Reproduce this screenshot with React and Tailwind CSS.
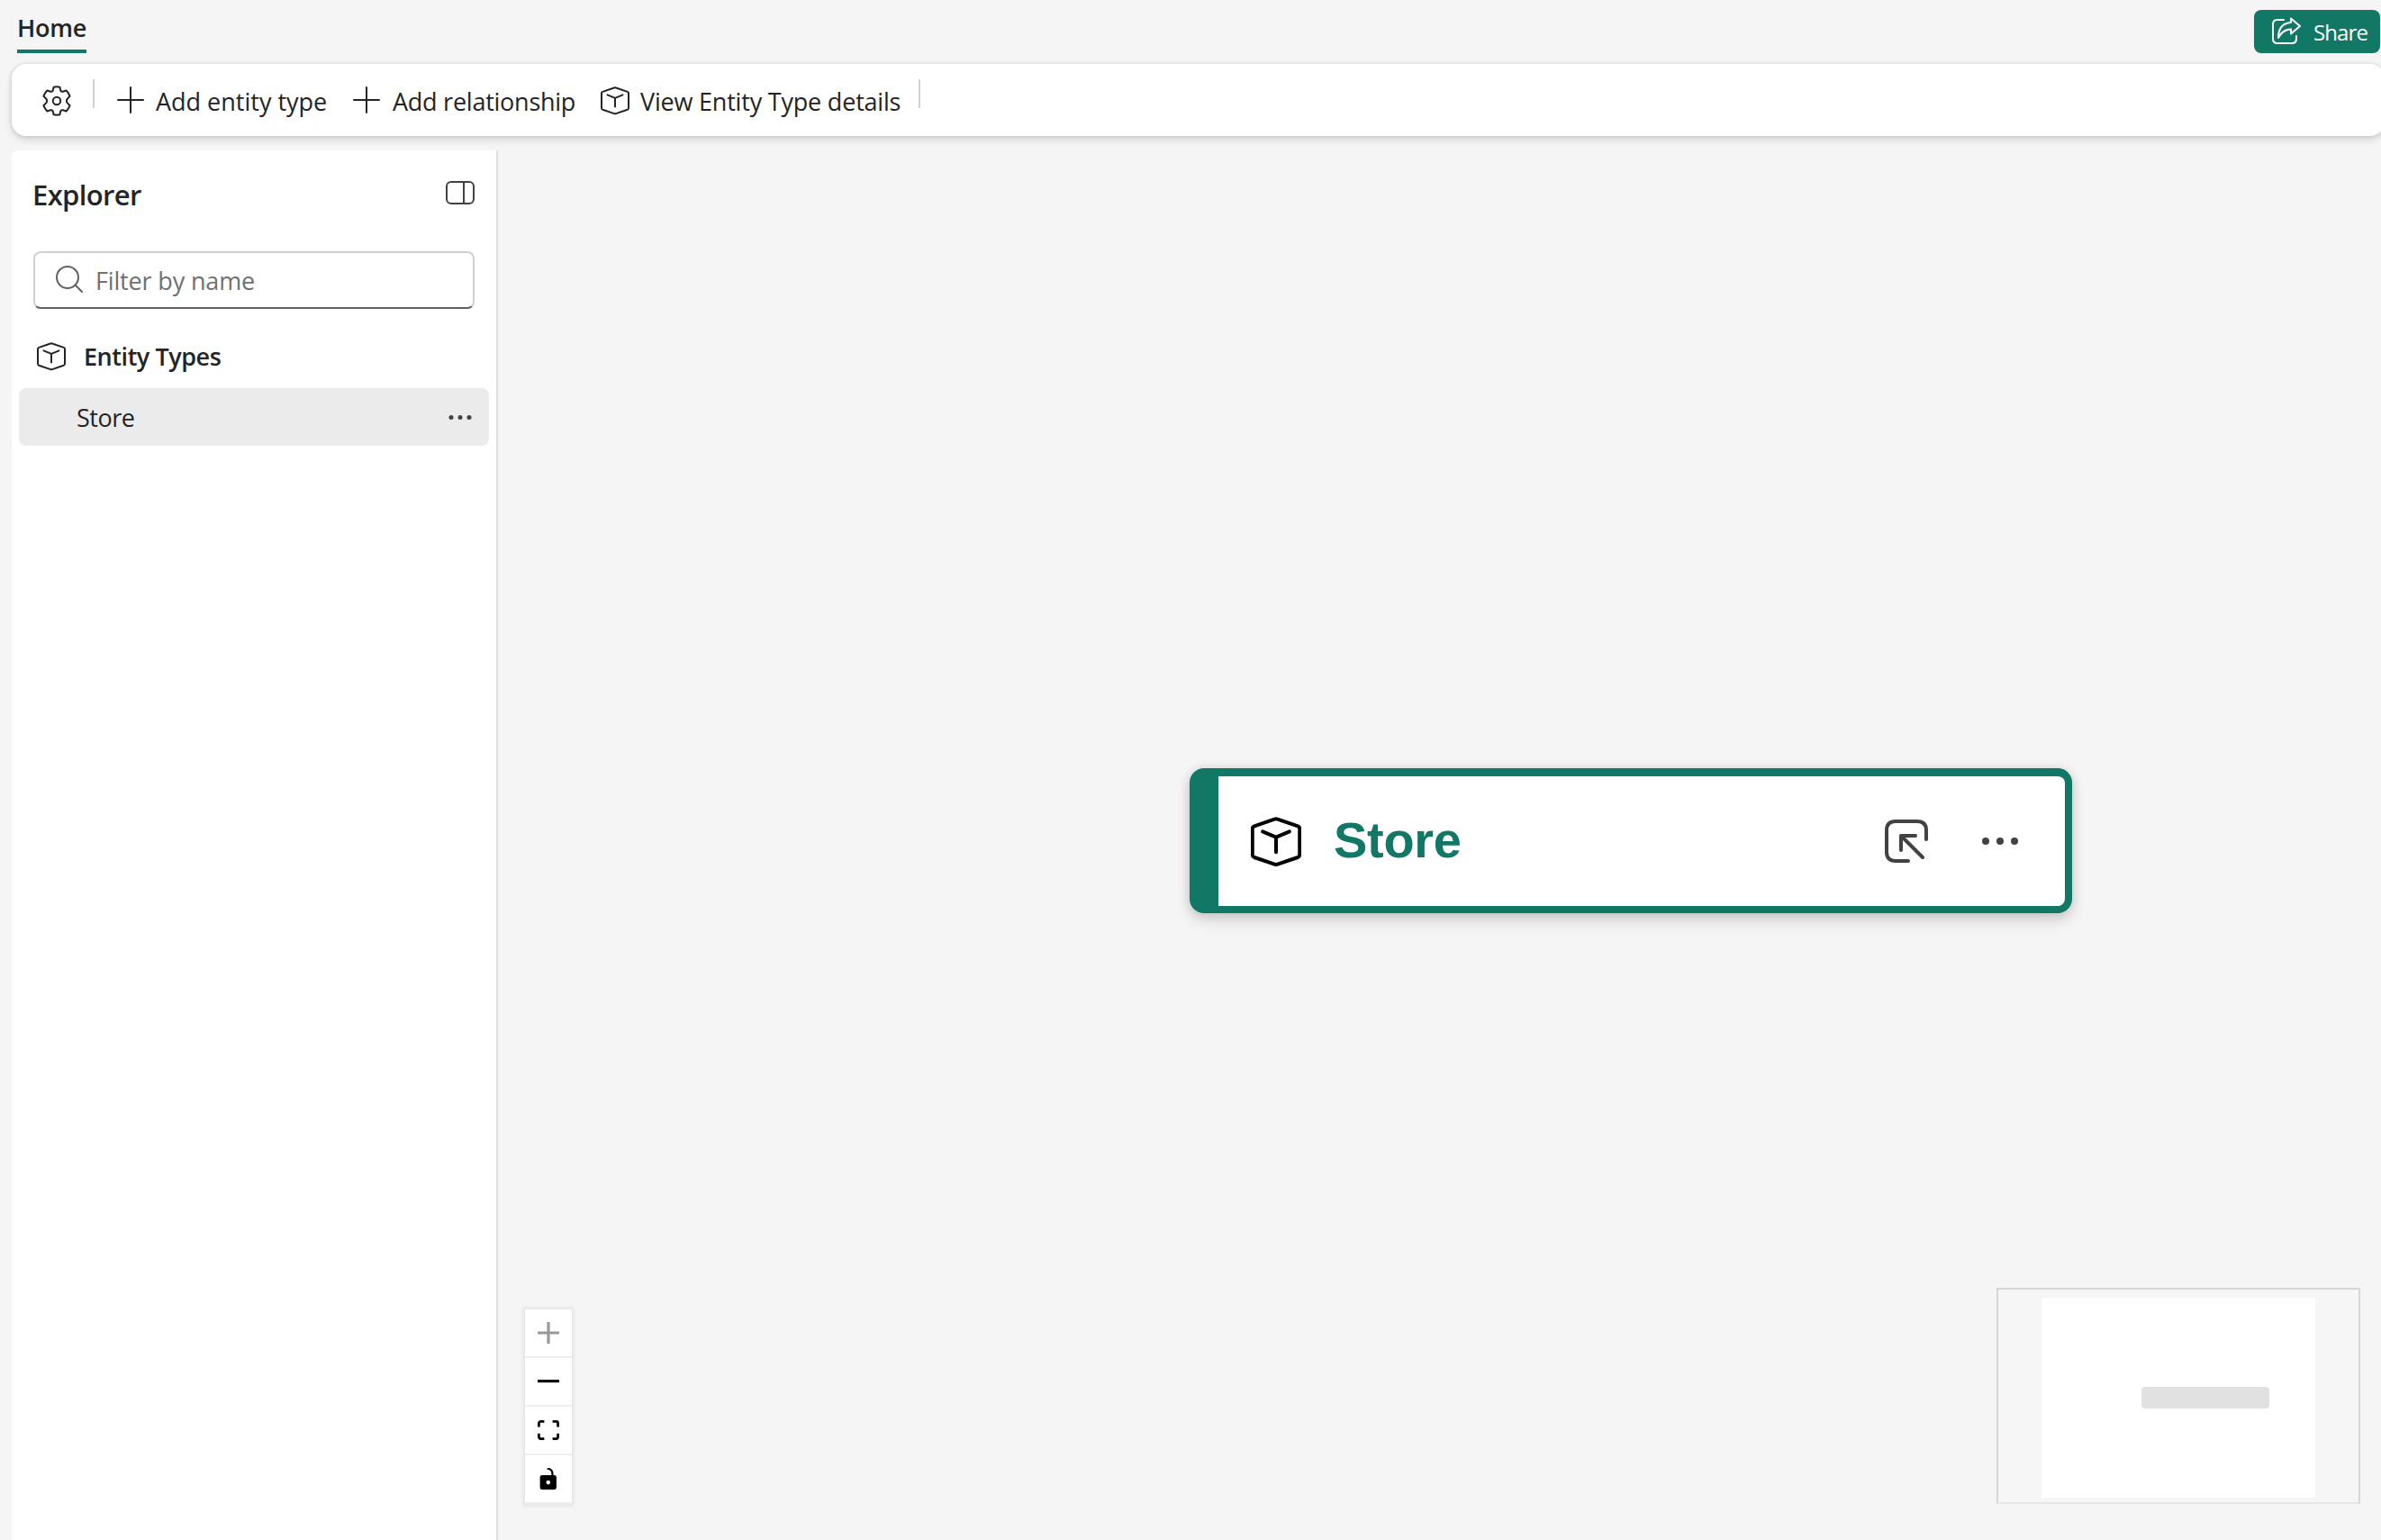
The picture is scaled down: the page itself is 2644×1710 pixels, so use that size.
import React from 'react';

const CubeIcon = ({ className, strokeWidth = 2 }) => (
    <svg className={className} viewBox="0 0 32 32" fill="none" stroke="currentColor" strokeWidth={strokeWidth} strokeLinecap="round" strokeLinejoin="round">
        <path d="M15 1.5 Q16 1.1 17 1.5 L29.8 5.9 Q31 6.4 31 7.6 V24 Q31 25.2 29.8 25.7 L17 30.1 Q16 30.5 15 30.1 L2.2 25.7 Q1 25.2 1 24 V7.6 Q1 6.4 2.2 5.9 Z" />
        <path d="M7.5 9.4 L16 12.9 L24.5 9.4 M16 12.9 V22.4" />
    </svg>
);

const PlusIcon = () => (
    <svg className="w-[30px] h-[30px] shrink-0" viewBox="0 0 30 30" stroke="currentColor" strokeWidth="2" strokeLinecap="round">
        <path d="M15 1V29M1 15H29" />
    </svg>
);

const GearIcon = () => (
    <svg className="mt-0.5 w-8 h-[34px] shrink-0" viewBox="0 0 32 34" fill="none" stroke="currentColor" strokeWidth="2" strokeLinejoin="round">
        <path d="M12.6 1.8 Q16 .9 19.4 1.8 L20.2 5.4 Q20.8 7.2 22.8 6.7 L26.6 5.5 Q29.3 8.2 30.6 11.8 L27.8 14.6 Q26 17 27.8 19.4 L30.6 22.2 Q29.3 25.8 26.6 28.5 L22.8 27.3 Q20.8 26.8 20.2 28.6 L19.4 32.2 Q16 33.1 12.6 32.2 L11.8 28.6 Q11.2 26.8 9.2 27.3 L5.4 28.5 Q2.7 25.8 1.4 22.2 L4.2 19.4 Q6 17 4.2 14.6 L1.4 11.8 Q2.7 8.2 5.4 5.5 L9.2 6.7 Q11.2 7.2 11.8 5.4 Z" />
        <circle cx="16" cy="17" r="4.2" />
    </svg>
);

const Dots = ({ className, r }) => (
    <svg className={className} viewBox="0 0 40 8" fill="#424242">
        <circle cx="4" cy="4" r={r} />
        <circle cx="20" cy="4" r={r} />
        <circle cx="36" cy="4" r={r} />
    </svg>
);

const controls = [
    {
        id: 'zoom-in',
        box: '0 0 32 32',
        color: 'text-[#999999]',
        d: 'M32 18.133H18.133V32h-4.266V18.133H0v-4.266h13.867V0h4.266v13.867H32z',
    },
    { id: 'zoom-out', box: '0 0 32 5', color: 'text-black', d: 'M0 0h32v4.2H0z' },
    {
        id: 'fit',
        box: '0 0 32 30',
        color: 'text-black',
        d: 'M3.692 4.63c0-.53.4-.938.939-.938h5.215V0H4.708C2.13 0 0 2.054 0 4.63v5.216h3.692V4.631zM27.354 0h-5.2v3.692h5.17c.53 0 .984.4.984.939v5.215H32V4.631A4.624 4.624 0 0027.354 0zm.954 24.83c0 .532-.4.94-.939.94h-5.215v3.768h5.215c2.577 0 4.631-2.13 4.631-4.707v-5.139h-3.692v5.139zm-23.677.94c-.531 0-.939-.4-.939-.94v-5.138H0v5.139c0 2.577 2.13 4.707 4.708 4.707h5.138V25.77H4.631z',
    },
    {
        id: 'lock',
        box: '0 0 25 32',
        color: 'text-black',
        d: 'M21.333 10.667H19.81V7.619C19.81 3.429 16.38 0 12.19 0c-4.114 1.828-1.37 2.133.305 2.438 1.676.305 4.42 2.59 4.42 5.181v3.048H3.047A3.056 3.056 0 000 13.714v15.238A3.056 3.056 0 003.048 32h18.285a3.056 3.056 0 003.048-3.048V13.714a3.056 3.056 0 00-3.048-3.047zM12.19 24.533a3.056 3.056 0 01-3.047-3.047 3.056 3.056 0 013.047-3.048 3.056 3.056 0 013.048 3.048 3.056 3.056 0 01-3.048 3.047z',
    },
];

function Header() {
    return (
        <header className="flex h-[71px] shrink-0 items-start justify-between pl-[19px] pr-px">
            <div className="mt-3 flex h-[47px] w-[77px] flex-col justify-between border-b-4 border-[#117865]">
                <span className="whitespace-nowrap text-[27px] leading-[38px] font-semibold tracking-[-0.25px]">Home</span>
            </div>
            <button className="mt-[11px] flex h-12 w-[140px] items-center rounded-lg bg-[#117865] pl-5 text-white">
                <svg className="h-[30px] w-8 shrink-0 -translate-y-px" viewBox="0 0 32 30" fill="none" stroke="currentColor" strokeWidth="2" strokeLinecap="round" strokeLinejoin="round">
                    <path d="M13 3H6Q1 3 1 8V24Q1 29 6 29H22Q27 29 27 24V21" />
                    <path d="M21 1.5L31 10L21 18.5V13.5Q12 13.5 7 23Q7 7 21 6Z" />
                </svg>
                <span className="ml-[14px] mt-0.5 whitespace-nowrap text-2xl leading-8 tracking-[-0.9px]">Share</span>
            </button>
        </header>
    );
}

function Toolbar() {
    return (
        <div className="relative z-10 ml-[13px] flex h-20 w-[2635px] shrink-0 items-center rounded-2xl bg-white pl-[34px] text-[27px] leading-10 shadow-[0_4px_8px_rgba(0,0,0,0.14),0_0_4px_rgba(0,0,0,0.12)]">
            <GearIcon />
            <div className="ml-6 mb-[14px] h-8 w-0.5 bg-[#d1d1d1]" />
            <button className="ml-[25px] flex w-[237px] items-center">
                <PlusIcon />
                <span className="ml-[13px] mt-1 whitespace-nowrap">Add entity type</span>
            </button>
            <button className="ml-[25px] flex w-[250px] items-center">
                <PlusIcon />
                <span className="ml-[14px] mt-1 whitespace-nowrap tracking-[-0.25px]">Add relationship</span>
            </button>
            <button className="ml-[25px] flex w-[353px] items-center">
                <CubeIcon className="mt-0.5 h-8 w-8 shrink-0" />
                <span className="ml-3 mt-1 whitespace-nowrap tracking-[-0.2px]">View Entity Type details</span>
            </button>
            <div className="mb-[14px] h-8 w-0.5 bg-[#d1d1d1]" />
        </div>
    );
}

function Explorer() {
    return (
        <aside className="w-[540px] shrink-0 rounded-tl-lg border-r-2 border-[#e0e0e0] bg-white">
            <div className="flex items-start justify-between pl-[23px] pr-6 pt-[27px]">
                <h2 className="whitespace-nowrap text-[31px] leading-[45px] font-semibold tracking-[-0.65px]">Explorer</h2>
                <svg className="mt-[7px] h-[26px] w-8" viewBox="0 0 32 26" fill="none" stroke="#424242" strokeWidth="2">
                    <rect x="1" y="1" width="30" height="24" rx="5" />
                    <path d="M20 1V25" />
                </svg>
            </div>
            <div className="ml-6 mt-10 flex h-16 w-[490px] items-center rounded-lg border-2 border-[#d1d1d1] border-b-[#616161] pl-[23px]">
                <svg className="mb-0.5 h-[30px] w-[30px] shrink-0" viewBox="0 0 30 30" fill="none" stroke="#616161" strokeWidth="2" strokeLinecap="round">
                    <circle cx="13" cy="13" r="12" />
                    <path d="M21.5 21.5L29 29" />
                </svg>
                <span className="ml-[14px] mt-0.5 whitespace-nowrap text-[27px] leading-10 tracking-[-0.15px] text-[#707070]">Filter by name</span>
            </div>
            <div className="mt-[33px] flex h-10 items-center pl-7">
                <CubeIcon className="-mt-px h-8 w-8 shrink-0" />
                <span className="ml-5 whitespace-nowrap text-[27px] leading-10 font-semibold tracking-[-0.45px]">Entity Types</span>
            </div>
            <div className="ml-2 mt-[15px] flex h-16 w-[522px] items-center justify-between rounded-lg bg-[#ebebeb] pl-16 pr-[19px]">
                <span className="mt-0.5 whitespace-nowrap text-[27px] leading-10 tracking-[-0.5px]">Store</span>
                <Dots className="h-[5px] w-[26px]" r={4} />
            </div>
        </aside>
    );
}

function EntityNode() {
    return (
        <div className="absolute left-[768px] top-[686px] flex h-[161px] w-[980px] items-center rounded-2xl border-t-[9px] border-r-8 border-b-8 border-l-[32px] border-[#117865] bg-white pl-9 shadow-[0_8px_16px_rgba(0,0,0,0.14),0_0_12px_rgba(0,0,0,0.12)]">
            <CubeIcon className="mt-px h-14 w-14 shrink-0 text-black" strokeWidth={2.3} />
            <span className="ml-9 mb-[3px] grow font-['Liberation_Sans',sans-serif] text-[56px] leading-[64px] font-bold tracking-[-0.3px] text-[#117865]">Store</span>
            <svg className="h-12 w-12 shrink-0" viewBox="0 0 48 48" fill="none" stroke="#424242" strokeWidth="4" strokeLinecap="round" strokeLinejoin="round">
                <path d="M26 46H12Q2 46 2 36V12Q2 2 12 2H36Q46 2 46 12V22" />
                <path d="M34 18H18V34M18 18L42 42" />
            </svg>
            <Dots className="ml-[60px] mr-[52px] h-2 w-10 shrink-0" r={4} />
        </div>
    );
}

function Canvas() {
    return (
        <main className="relative grow overflow-hidden">
            <EntityNode />
            <div className="absolute left-[30px] top-[1287px] w-[52px] shadow-[0_0_4px_2px_rgba(0,0,0,0.08)]">
                {controls.map((c) => (
                    <div key={c.id} className="flex h-[54px] items-center justify-center border-b-2 border-[#eeeeee] bg-white">
                        <svg className={`max-h-6 w-6 ${c.color}`} viewBox={c.box} fill="currentColor">
                            <path d={c.d} />
                        </svg>
                    </div>
                ))}
            </div>
            <div className="absolute left-[1664px] top-[1263px] h-60 w-[404px] border-2 border-[#d6d6d6] border-b-[#e6e6e6] bg-[#f6f6f6] pl-12 pt-[9px]">
                <div className="h-[222px] w-[304px] bg-white pl-[111px] pt-[99px]">
                    <div className="h-6 w-[142px] rounded bg-[#e1e1e1]" />
                </div>
            </div>
        </main>
    );
}

export default function App() {
    return (
        <div className="flex h-[1710px] w-[2644px] flex-col overflow-hidden bg-[#f5f5f5] font-['Open_Sans','Noto_Sans',sans-serif] text-[#242424]">
            <Header />
            <Toolbar />
            <div className="ml-[13px] mt-4 flex grow">
                <Explorer />
                <Canvas />
            </div>
        </div>
    );
}
